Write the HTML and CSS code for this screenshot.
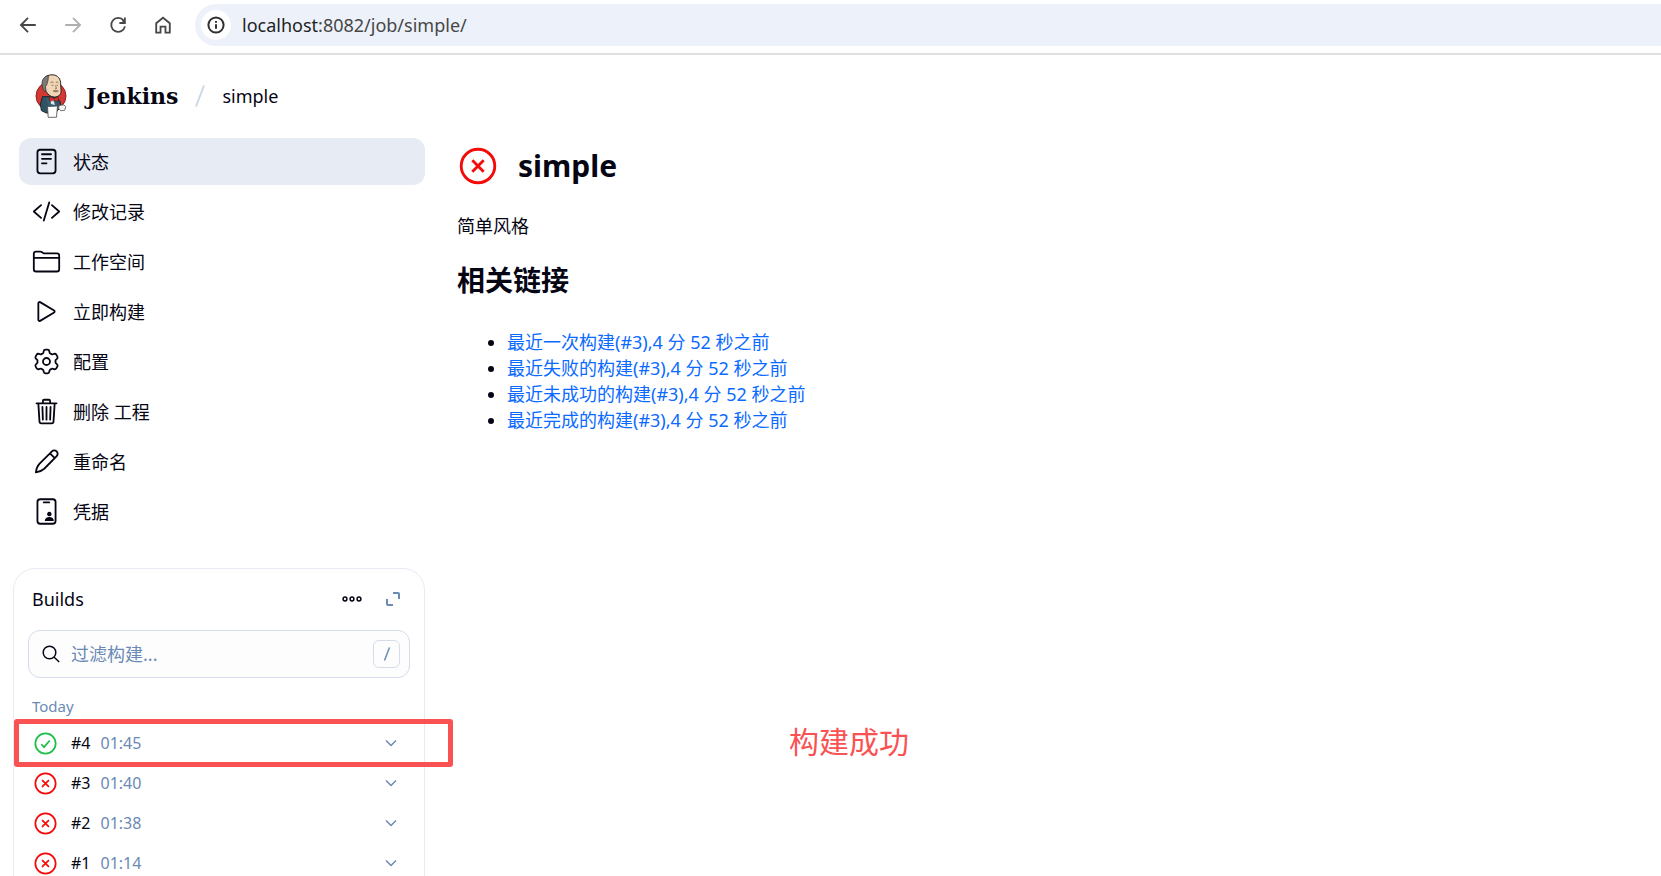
FILE: index.html
```html
<!DOCTYPE html>
<html lang="zh-CN">
<head>
  <meta charset="UTF-8" />
  <meta name="viewport" content="width=device-width, initial-scale=1" />
  <title>simple [Jenkins]</title>
  <link rel="stylesheet" href="styles.css">
</head>
<body>

  <!-- shared symbols -->
  <svg class="symbols" aria-hidden="true">
    <symbol id="chevron" viewBox="0 0 12 8"><path d="M1 1.5l5 5 5-5" /></symbol>
    <symbol id="failed" viewBox="0 0 24 24"><circle cx="12" cy="12" r="10.6" /><path d="M8.4 8.4l7.2 7.2M15.6 8.4l-7.2 7.2" /></symbol>
    <symbol id="success" viewBox="0 0 24 24"><circle cx="12" cy="12" r="10.6" /><path d="M7.6 12.8l2.9 3 5.9-7" /></symbol>
  </svg>

  <div class="toolbar">
    <button class="nav-btn" aria-label="Back"><svg viewBox="0 0 24 24"><path d="M20.5 12H4.5M12 4.3L4.3 12l7.7 7.7" /></svg></button>
    <button class="nav-btn off" aria-label="Forward" disabled><svg viewBox="0 0 24 24"><path d="M3.5 12h16M12 4.3l7.7 7.7-7.7 7.7" /></svg></button>
    <button class="nav-btn" aria-label="Reload"><svg viewBox="0 0 24 24"><path d="M18.2 7.2A7.6 7.6 0 1 0 19.6 13.5M19.5 3.8v6h-6M19.5 9.6l-2.6-3" /></svg></button>
    <button class="nav-btn" aria-label="Home"><svg viewBox="0 0 24 24"><path d="M4.6 10L12 4l7.4 6v10.4h-4.7v-6.6H9.3v6.6H4.6z" /></svg></button>
    <div class="address">
      <button class="info" aria-label="Site information"><svg viewBox="0 0 18 18"><circle cx="9" cy="9" r="7.6" /><path d="M9 8.2v4.6M9 5v1.8" /></svg></button>
      <a class="url" href="#">localhost<span>:8082/job/simple/</span></a>
    </div>
  </div>

  <header class="header">
    <a class="brand" href="#">
      <svg class="logo" viewBox="0 0 32 44" aria-hidden="true">
        <ellipse cx="16" cy="22" rx="15" ry="14.5" fill="#d33833" stroke="#8e2320" />
        <path d="M7.500 22.500L5.500 30l.8 6.500 5 2.500h9l5.500-6-.5-5-3.500-5z" fill="#2f5363" stroke="#20242c" />
        <path d="M10 23l6 4 5.500-3.500.5 8-8 2z" fill="#355f70" stroke="none" />
        <path d="M15 24.500l3 .5 2 6-4-1z" fill="#dfe8ec" stroke="none" />
        <path d="M8.500 13C6 4 12 .8 17 .8c6 0 9 4.200 8.700 10.200l.4 6c-.3 4-3 6-6.600 6-4 0-7.500-3-9-7z" fill="#f0d6b7" stroke="#2a2523" />
        <path d="M13.500 1.500C8 2.500 6.200 7.500 7.300 12c.2 2 .9 4 2.200 5.500l1.500-1-.5-4c1.800-1.400 1.700-4 2.500-6z" fill="#7d7a78" stroke="#35302e" stroke-width=".7" />
        <path d="M15.500 8.500q1.600-1.200 3 0M20.800 8.500q1.500-1 2.600.2M16.500 11.300h2M21.500 11.300h1.600M20.500 11.500l1 3-1.500.3" fill="none" stroke="#6b513b" stroke-width=".7" />
        <path d="M18 17q2.700-1.500 5.500-.1l-2.500 1.200z" fill="#b08a72" stroke="#6b4a38" stroke-width=".5" />
        <path d="M14.500 22.800l4.500 1.900 4.300-2-.2 4.700-4.200-1.300-4.300 1.500z" fill="#e0302b" stroke="#5e1715" stroke-width=".5" />
        <path d="M12.500 32.500l10-.5-1 11.200-8.300.2z" fill="#fff" stroke="#444" stroke-width=".8" />
        <path d="M24 31.500l5-.7 1.700 2-1 3.500-4 .5-2-2.500z" fill="#f7f3ee" stroke="#555" stroke-width=".8" />
      </svg>
      <span class="brand-name">Jenkins</span>
    </a>
    <svg class="slash" viewBox="0 0 10 22" aria-hidden="true"><path d="M1 21.500L9 .5" /></svg>
    <a class="crumb" href="#">simple</a>
  </header>

  <div class="page">
    <aside class="sidebar">
      <nav class="tasks">
        <a class="task active" href="#">
          <svg viewBox="0 0 512 512"><rect x="96" y="48" width="320" height="416" rx="48" /><path d="M176 128h160M176 208h160M176 288h80" /></svg>状态</a>
        <a class="task" href="#">
          <svg viewBox="0 0 512 512"><path d="M160 368L32 256l128-112M352 368l128-112-128-112M304 96l-96 320" /></svg>修改记录</a>
        <a class="task" href="#">
          <svg viewBox="0 0 512 512"><path d="M440 432H72a40 40 0 01-40-40V120a40 40 0 0140-40h75.890a40 40 0 0122.190 6.720l27.840 18.560a40 40 0 0022.190 6.720H440a40 40 0 0140 40v240a40 40 0 01-40 40zM32 192h448" /></svg>工作空间</a>
        <a class="task" href="#">
          <svg viewBox="0 0 512 512"><path d="M112 111v290c0 17.440 17 28.520 31 20.160l247.900-148.370c12.120-7.250 12.120-26.330 0-33.580L143 90.840c-14-8.360-31 2.720-31 20.160z" /></svg>立即构建</a>
        <a class="task" href="#">
          <svg viewBox="0 0 512 512"><circle cx="256" cy="256" r="62" /><path d="M206 76q4-30 32-30h36q28 0 32 30l4 20q3 12 14 18l22 12q10 6 22 2l20-7q27-9 41 14l18 31q14 25-7 43l-16 14q-9 8-9 20v26q0 12 9 20l16 14q21 18 7 43l-18 31q-14 23-41 14l-20-7q-12-4-22 2l-22 12q-11 6-14 18l-4 20q-4 30-32 30h-36q-28 0-32-30l-4-20q-3-12-14-18l-22-12q-10-6-22-2l-20 7q-27 9-41-14l-18-31q-14-25 7-43l16-14q9-8 9-20v-26q0-12-9-20l-16-14q-21-18-7-43l18-31q14-23 41-14l20 7q12 4 22-2l22-12q11-6 14-18z" /></svg>配置</a>
        <a class="task" href="#">
          <svg viewBox="0 0 512 512"><path d="M112 112l20 320c.950 18.490 14.400 32 32 32h184c18 0 30.870-13.510 32-32l20-320M80 112h352M192 112V72a24 24 0 0124-24h80a24 24 0 0124 24v40M256 176v224M184 176l8 224M328 176l-8 224" /></svg>删除 工程</a>
        <a class="task" href="#">
          <svg viewBox="0 0 512 512"><path d="M68 448c8-60 24-110 62-150L352 78a58 58 0 0184 82L216 384c-42 38-92 56-148 64zM318 112l84 84" /></svg>重命名</a>
        <a class="task" href="#">
          <svg viewBox="0 0 512 512"><rect x="96" y="40" width="320" height="432" rx="48" /><path d="M208 96h96" /><path class="solid" d="M306 262a40 40 0 1 0 .1 0zM226 424c0-50 36-72 80-72s80 22 80 72z" /></svg>凭据</a>
      </nav>

      <section class="builds">
        <div class="builds-head">
          <h2>Builds</h2>
          <button class="icon-btn" aria-label="More"><svg class="dots" viewBox="0 0 20 6"><circle cx="3" cy="3" r="1.900" /><circle cx="10" cy="3" r="1.900" /><circle cx="17" cy="3" r="1.900" /></svg></button>
          <button class="icon-btn" aria-label="Expand"><svg class="expand" viewBox="0 0 14 14"><path d="M7 1h5q1 0 1 1v5M7 13H2q-1 0-1-1V7" /></svg></button>
        </div>
        <div class="search">
          <svg viewBox="0 0 18 18" aria-hidden="true"><circle cx="7.500" cy="7.500" r="6.300" /><path d="M12.200 12.200l5 4.800" /></svg>
          <input type="text" placeholder="过滤构建..." aria-label="过滤构建">
          <kbd><svg viewBox="0 0 8 16" aria-hidden="true"><path d="M1.500 14.500l5-13" /></svg></kbd>
        </div>
        <p class="day">Today</p>
        <ul class="build-list">
          <li class="build marked">
            <svg class="status ok"><use href="#success" /></svg>
            <a href="#">#4</a><span class="time">01:45</span>
            <button class="icon-btn" aria-label="#4"><svg class="chevron"><use href="#chevron" /></svg></button>
          </li>
          <li class="build">
            <svg class="status"><use href="#failed" /></svg>
            <a href="#">#3</a><span class="time">01:40</span>
            <button class="icon-btn" aria-label="#3"><svg class="chevron"><use href="#chevron" /></svg></button>
          </li>
          <li class="build">
            <svg class="status"><use href="#failed" /></svg>
            <a href="#">#2</a><span class="time">01:38</span>
            <button class="icon-btn" aria-label="#2"><svg class="chevron"><use href="#chevron" /></svg></button>
          </li>
          <li class="build">
            <svg class="status"><use href="#failed" /></svg>
            <a href="#">#1</a><span class="time">01:14</span>
            <button class="icon-btn" aria-label="#1"><svg class="chevron"><use href="#chevron" /></svg></button>
          </li>
        </ul>
      </section>
    </aside>

    <main class="main">
      <h1><svg class="status big"><use href="#failed" /></svg>simple</h1>
      <p class="description">简单风格</p>
      <h2>相关链接</h2>
      <ul class="permalinks">
        <li><a href="#">最近一次构建(#3),4 分 52 秒之前</a></li>
        <li><a href="#">最近失败的构建(#3),4 分 52 秒之前</a></li>
        <li><a href="#">最近未成功的构建(#3),4 分 52 秒之前</a></li>
        <li><a href="#">最近完成的构建(#3),4 分 52 秒之前</a></li>
      </ul>
      <p class="note">构建成功</p>
    </main>
  </div>

</body>
</html>
```
FILE: styles.css
```css
*, *::after {
  box-sizing: border-box;
}
body {
  margin: 0;
  height: 100vh;
  overflow: hidden;
  display: flex;
  flex-direction: column;
  background: #fff;
  color: #050514;
  font-family: "Noto Sans", "Noto Sans CJK SC", sans-serif;
  font-size: 18px;
  line-height: 26px;
}
a {
  color: inherit;
  text-decoration: none;
}
button {
  border: none;
  background: none;
  padding: 0;
  cursor: pointer;
}
h1, h2, p, ul {
  margin: 0;
}
svg {
  display: block;
  flex-shrink: 0;
  fill: none;
  stroke: currentColor;
}
.symbols {
  display: none;
}

/* browser bar */
.toolbar {
  flex-shrink: 0;
  display: flex;
  align-items: center;
  gap: 23px;
  height: 55px;
  padding: 0 0 4px 17px;
  border-bottom: 2px solid #e0e0e0;
}
.nav-btn {
  color: #474747;
}
.nav-btn.off {
  color: #b0b0b0;
}
.nav-btn svg {
  width: 22px;
  height: 22px;
  stroke-width: 2;
}
.address {
  flex: 1;
  display: flex;
  align-items: center;
  gap: 11px;
  height: 42px;
  padding-left: 6px;
  margin-left: -2px;
  background: #ecf1fa;
  border-radius: 21px 0 0 21px;
}
.info {
  display: flex;
  align-items: center;
  justify-content: center;
  width: 30px;
  height: 30px;
  border-radius: 50%;
  background: #fff;
  color: #303030;
}
.info svg {
  width: 18px;
  height: 18px;
  stroke-width: 2;
}
.url {
  color: #1f1f1f;
  font-size: 18px;
}
.url span {
  color: #474747;
}

/* breadcrumb header */
.header {
  flex-shrink: 0;
  display: flex;
  align-items: center;
  height: 83px;
  padding: 0 35px 1px;
}
.brand {
  display: flex;
  align-items: center;
  gap: 19px;
}
.logo {
  width: 32px;
  height: 44px;
}
.brand-name {
  font-family: "DejaVu Serif", serif;
  font-size: 22px;
  font-weight: bold;
}
.slash {
  width: 10px;
  height: 22px;
  margin: 0 17px;
  color: #ccd8e8;
  stroke-width: 2;
}

/* layout */
.page {
  flex: 1;
  min-height: 0;
  display: flex;
  gap: 32px;
}
.sidebar {
  flex: 0 0 425px;
  padding-left: 13px;
}
.tasks {
  display: flex;
  flex-direction: column;
  gap: 3px;
  padding-left: 6px;
  margin-bottom: 33px;
}
.task {
  display: flex;
  align-items: center;
  gap: 12px;
  height: 47px;
  padding: 0 13px;
  border-radius: 12px;
}
.task.active {
  background: #e7ecf4;
}
.task svg {
  width: 29px;
  height: 29px;
  stroke-width: 32;
  stroke-linecap: round;
  stroke-linejoin: round;
}
.task .solid {
  fill: currentColor;
  stroke: none;
}

/* build history */
.builds {
  padding: 14px 14px 32px;
  border: 1px solid #e8ebf3;
  border-radius: 22px;
}
.builds-head {
  display: flex;
  align-items: center;
  height: 32px;
  padding: 0 2px 0 4px;
  margin-bottom: 15px;
}
.builds-head h2 {
  flex: 1;
  font-size: 18px;
  font-weight: normal;
}
.icon-btn {
  display: flex;
  align-items: center;
  justify-content: center;
  width: 31px;
  height: 31px;
  margin-left: 10px;
  color: #6b8ab5;
}
.dots {
  width: 20px;
  height: 6px;
  color: #050514;
  stroke-width: 1.5;
}
.expand {
  width: 14px;
  height: 14px;
  stroke-width: 2;
}
.search {
  display: flex;
  align-items: center;
  gap: 11px;
  height: 48px;
  padding: 0 9px 0 13px;
  border: 1px solid #d5dcea;
  border-radius: 12px;
  background: #fdfdfe;
}
.search svg {
  width: 18px;
  height: 18px;
  stroke-width: 1.5;
}
.search input {
  flex: 1;
  min-width: 0;
  border: none;
  outline: none;
  background: none;
  padding: 0;
  font: inherit;
}
.search input::placeholder {
  color: #6b8ab5;
}
.search kbd {
  display: flex;
  align-items: center;
  justify-content: center;
  width: 27px;
  height: 28px;
  border: 1px solid #d5dcea;
  border-radius: 6px;
  color: #6b8ab5;
}
.search kbd svg {
  width: 8px;
  height: 16px;
}
.day {
  padding: 15px 4px 4px;
  font-size: 15px;
  line-height: 26px;
  color: #6b8ab5;
}
.build-list {
  padding: 0;
  list-style: none;
}
.build {
  position: relative;
  display: flex;
  align-items: center;
  height: 40px;
  padding: 0 4px 0 6px;
  font-size: 16px;
}
.status {
  width: 23px;
  height: 23px;
  color: #f50a0a;
  stroke-width: 1.8;
}
.status.ok {
  color: #1ebe4b;
}
.build a {
  margin: 0 10px 0 14px;
}
.time {
  flex: 1;
  color: #6b8ab5;
}
.chevron {
  width: 12px;
  height: 8px;
  stroke-width: 1.5;
}
/* red frame round the newest build */
.marked::after {
  content: "";
  position: absolute;
  top: -4px;
  left: -14px;
  right: -43px;
  height: 48px;
  border: 5px solid #fa5252;
  border-radius: 3px;
  pointer-events: none;
}

/* project page */
.main {
  position: relative;
  flex: 1;
  min-width: 0;
}
.main h1 {
  display: flex;
  align-items: center;
  gap: 21px;
  height: 56px;
  padding-left: 2px;
  font-size: 30px;
  line-height: 44px;
}
.status.big {
  width: 38px;
  height: 38px;
}
.description {
  margin-top: 19px;
}
.main h2 {
  margin-top: 21px;
  font-size: 28px;
  line-height: 40px;
}
.permalinks {
  margin-top: 29px;
  padding-left: 50px;
}
.permalinks a {
  color: #0b6aff;
}
.note {
  position: absolute;
  top: 582px;
  left: 332px;
  color: #fa5252;
  font-size: 30px;
  line-height: 44px;
}
```
